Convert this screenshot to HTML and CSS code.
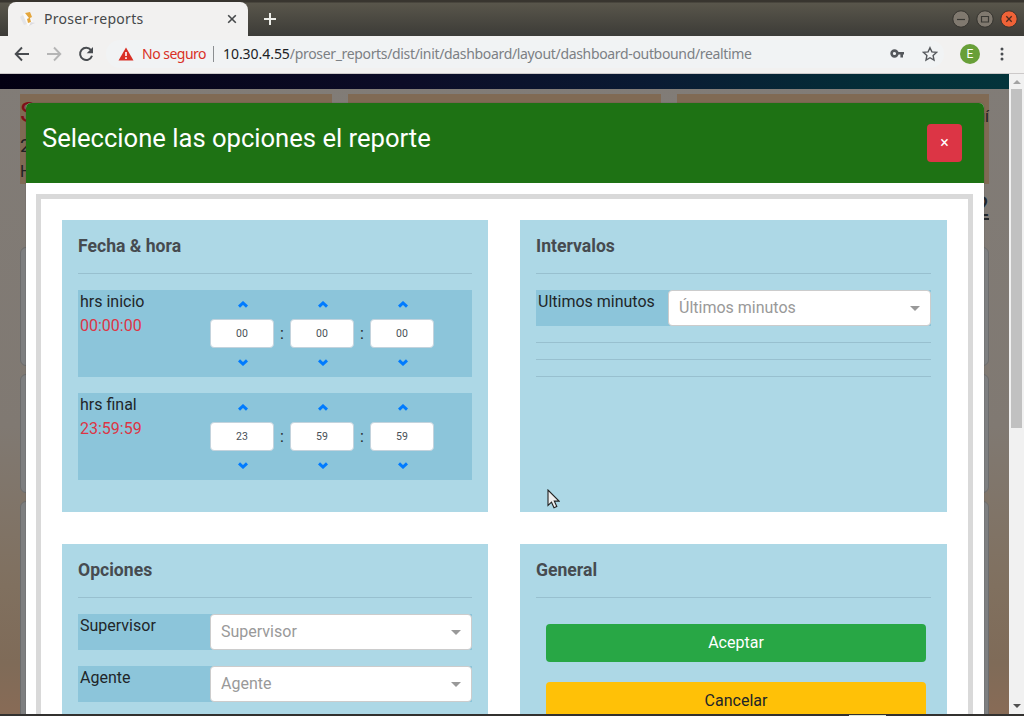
FILE: index.html
```html
<!DOCTYPE html>
<html lang="es">
<head>
<meta charset="utf-8">
<title>Proser-reports</title>
<link rel="stylesheet" href="styles.css">
</head>
<body>
<div class="window">
  <header class="titlebar">
    <div class="tab">
      <svg class="favicon" width="18" height="18" viewBox="0 0 18 18"><path d="M1 7l3-2 4 9-3 1z" fill="#e3e4e8"/><path d="M4 4l5-2 6 12-6 2z" fill="#fafafa"/><path d="M6 3l5-1 2 5-2 1 1 4-3 1-1-4 2-1z" fill="#e4a63c"/><path d="M12 12l4 1-6 3z" fill="#dddce0"/></svg>
      <span class="tab-title">Proser-reports</span>
      <svg width="10" height="10" viewBox="0 0 10 10"><path d="M1.2 1.2l7.6 7.6M8.800 1.200L1.200 8.800" stroke="#45484a" stroke-width="1.600"/></svg>
    </div>
    <svg class="new-tab" width="14" height="14" viewBox="0 0 14 14"><path d="M7 1v12M1 7h12" stroke="#eeeeea" stroke-width="2"/></svg>
    <div class="controls">
      <svg width="18" height="18" viewBox="0 0 18 18"><circle cx="9" cy="9" r="8.2" fill="#80796f" stroke="#34332e"/><path d="M5 9.5h8" stroke="#393833" stroke-width="1.2"/></svg>
      <svg width="18" height="18" viewBox="0 0 18 18"><circle cx="9" cy="9" r="8.2" fill="#80796f" stroke="#34332e"/><path d="M5.5 6.5h7v5.500h-7z" fill="none" stroke="#393833" stroke-width="1.2"/></svg>
      <svg width="18" height="18" viewBox="0 0 18 18"><circle cx="9" cy="9" r="8.2" fill="#ef6237" stroke="#38332e"/><path d="M6.300 6.300l5.400 5.400M11.700 6.300l-5.400 5.400" stroke="#4b2b20" stroke-width="1.300"/></svg>
    </div>
  </header>
  <div class="toolbar">
    <svg class="nav-icon" width="16" height="16" viewBox="0 0 16 16"><path d="M15 8H2M8 1.500L1.700 8 8 14.500" fill="none" stroke="#494c50" stroke-width="1.900"/></svg>
    <svg class="nav-icon" width="16" height="16" viewBox="0 0 16 16"><path d="M1 8h13M8 1.500L14.300 8 8 14.500" fill="none" stroke="#b5b5b5" stroke-width="1.900"/></svg>
    <svg class="nav-icon" width="16" height="16" viewBox="0 0 16 16"><path d="M13 4.100A6.100 6.100 0 1 0 14 9.800" fill="none" stroke="#494c50" stroke-width="2"/><path d="M15 1v6.300H8.700z" fill="#494c50"/></svg>
    <div class="omnibox">
      <svg width="16" height="14" viewBox="0 0 16 14"><path d="M8 0.500l7.500 13H0.500z" fill="#d93025"/><path d="M8 5v4M8 10.300v1.700" stroke="#fff" stroke-width="1.600"/></svg>
      <span class="insecure">No seguro</span>
      <span class="divider"></span>
      <span class="url"><span class="host">10.30.4.55</span><span class="path">/proser_reports/dist/init/dashboard/layout/dashboard-outbound/realtime</span></span>
      <svg class="key" width="15" height="10" viewBox="0 0 15 10"><circle cx="4.500" cy="4.500" r="2.900" fill="none" stroke="#55585c" stroke-width="2.600"/><path d="M7.500 4.300h6.500M11.700 4v4.500" stroke="#55585c" stroke-width="2.600"/></svg>
      <svg class="star" width="16" height="16" viewBox="0 0 16 16"><path d="M8 1.700l1.900 4.200 4.600.5-3.400 3.100.9 4.500-4-2.300-4 2.300.9-4.500-3.400-3.100 4.600-.5z" fill="none" stroke="#55585c" stroke-width="1.400"/></svg>
    </div>
    <span class="avatar">E</span>
    <svg width="4" height="14" viewBox="0 0 4 14"><circle cx="2" cy="2" r="1.500" fill="#494c50"/><circle cx="2" cy="7" r="1.500" fill="#494c50"/><circle cx="2" cy="12" r="1.500" fill="#494c50"/></svg>
  </div>
  <div class="viewport">
    <div class="page">
      <div class="navbar"></div>
      <div class="backdrop">
        <div class="cards">
          <div class="card"><span class="card-title">S</span><span class="card-count">2</span><span>H</span></div>
          <div class="card"></div>
          <div class="card card-end"><span>aquí</span></div>
        </div>
        <div class="total">2</div>
        <div class="boxes"><div class="box"></div><div class="box"></div><div class="box box-tall"></div></div>
      </div>
      <div class="modal">
        <div class="modal-header"><h1>Seleccione las opciones el reporte</h1><button class="close">×</button></div>
        <div class="modal-body">
          <div class="frame">
            <section class="panel">
              <h2>Fecha &amp; hora</h2><hr>
              <div class="time-row">
                <div class="label">hrs inicio<span class="value">00:00:00</span></div>
                <div class="picker">
                  <div class="spin"><svg class="chev" viewBox="0 0 10 7"><path d="M1 5.700L5 2l4 3.700"/></svg><span class="num">00</span><svg class="chev" viewBox="0 0 10 7"><path d="M1 1.300L5 5l4-3.700"/></svg></div><span class="colon">:</span>
                  <div class="spin"><svg class="chev" viewBox="0 0 10 7"><path d="M1 5.700L5 2l4 3.700"/></svg><span class="num">00</span><svg class="chev" viewBox="0 0 10 7"><path d="M1 1.300L5 5l4-3.700"/></svg></div><span class="colon">:</span>
                  <div class="spin"><svg class="chev" viewBox="0 0 10 7"><path d="M1 5.700L5 2l4 3.700"/></svg><span class="num">00</span><svg class="chev" viewBox="0 0 10 7"><path d="M1 1.300L5 5l4-3.700"/></svg></div>
                </div>
              </div>
              <div class="time-row">
                <div class="label">hrs final<span class="value">23:59:59</span></div>
                <div class="picker">
                  <div class="spin"><svg class="chev" viewBox="0 0 10 7"><path d="M1 5.700L5 2l4 3.700"/></svg><span class="num">23</span><svg class="chev" viewBox="0 0 10 7"><path d="M1 1.300L5 5l4-3.700"/></svg></div><span class="colon">:</span>
                  <div class="spin"><svg class="chev" viewBox="0 0 10 7"><path d="M1 5.700L5 2l4 3.700"/></svg><span class="num">59</span><svg class="chev" viewBox="0 0 10 7"><path d="M1 1.300L5 5l4-3.700"/></svg></div><span class="colon">:</span>
                  <div class="spin"><svg class="chev" viewBox="0 0 10 7"><path d="M1 5.700L5 2l4 3.700"/></svg><span class="num">59</span><svg class="chev" viewBox="0 0 10 7"><path d="M1 1.300L5 5l4-3.700"/></svg></div>
                </div>
              </div>
            </section>
            <section class="panel">
              <h2>Intervalos</h2><hr>
              <div class="select-row"><div class="label">Ultimos minutos</div><div class="select"><span>Últimos minutos</span><i class="caret"></i></div></div>
              <hr><hr><hr>
            </section>
            <section class="panel">
              <h2>Opciones</h2><hr>
              <div class="select-row"><div class="label">Supervisor</div><div class="select"><span>Supervisor</span><i class="caret"></i></div></div>
              <div class="select-row"><div class="label">Agente</div><div class="select"><span>Agente</span><i class="caret"></i></div></div>
            </section>
            <section class="panel">
              <h2>General</h2><hr>
              <div class="actions"><button class="btn accept">Aceptar</button><button class="btn cancel">Cancelar</button></div>
            </section>
          </div>
        </div>
      </div>
    </div>
    <div class="scrollbar"><i class="arrow arrow-up"></i><div class="thumb"></div><i class="arrow arrow-down"></i></div>
  </div>
  <footer class="desktop-edge"><span class="edge-light"></span></footer>
  <svg class="cursor" width="13" height="20" viewBox="0 0 13 20"><path d="M1 1v15.500l3.500-3.300 2.500 5.500 2.800-1.200-2.500-5.400H12z" fill="#eee" stroke="#222" stroke-width="1.100"/></svg>
</div>
</body>
</html>
```

FILE: styles.css
```css
* { box-sizing: border-box; }
body { margin: 0; overflow: hidden; font: 16px/24px Roboto, sans-serif; color: #212529; }
svg { flex: none; display: block; }
.window { position: relative; width: 1024px; height: 716px; display: flex; flex-direction: column; overflow: hidden; }
.titlebar { height: 36px; flex: none; display: flex; align-items: center; padding-left: 8px; background: linear-gradient(#38352f 0 2px, #59564b 3px, #3c3b37 100%); }
.tab { width: 240px; height: 34px; align-self: flex-end; display: flex; align-items: center; padding: 0 11px 0 11px; background: #f2f1f0; border-radius: 8px 8px 0 0; }
.tab-title { flex: 1; margin-left: 7px; font: 14px/20px "Noto Sans", sans-serif; letter-spacing: .3px; color: #45484a; }
.new-tab { margin: 2px 0 0 15px; }
.controls { margin: 2px 6px 0 auto; display: flex; gap: 6px; }
.toolbar { height: 38px; flex: none; display: flex; align-items: center; padding: 0 20px 2px 14px; background: #f2f1f0; border-bottom: 1px solid #ccc9c9; font-family: "Noto Sans", sans-serif; font-size: 14px; }
.nav-icon { margin-right: 16px; }
.omnibox { width: 838px; height: 28px; margin-left: -4px; display: flex; align-items: center; padding: 0 6px 0 12px; border-radius: 14px; background: #f1f3f4; }
.insecure { width: 65px; margin-left: 8px; color: #d93025; white-space: nowrap; letter-spacing: -.5px; }
.divider { width: 1px; height: 16px; margin: 0 9px 0 6px; background: #8b8e91; }
.url { white-space: nowrap; color: #7c8084; }
.host { color: #202124; letter-spacing: -.05px; }
.path { letter-spacing: -.335px; }
.key { margin-left: auto; }
.star { margin-left: 17px; }
.avatar { width: 20px; height: 20px; margin: 0 auto 0 16px; border-radius: 50%; background: #689f38; color: #fff; font: 12px/20px Roboto, sans-serif; text-align: center; }
.viewport { height: 640px; display: flex; }
.page { position: relative; width: 1009px; overflow: hidden; background: linear-gradient(#817c77 0, #807972 55%, #80705f 80%, #7f6b58 92%, #886b56 100%); }
.navbar { height: 15px; background: linear-gradient(90deg, #030012, #0c0c27 40%, #0a1b33 65%, #032f38 88%, #04343b); }
.backdrop { padding: 5px 20px 0; }
.cards { display: grid; grid-template-columns: repeat(3, 1fr); gap: 16px; }
.card { height: 90px; display: flex; flex-direction: column; background: #806a54; color: #202022; }
.card-title { font-size: 28px; line-height: 38px; color: #800f18; }
.card-count { font-size: 19px; line-height: 28px; }
.card-end { align-items: flex-end; padding-top: 11px; }
.total { height: 63px; padding-top: 11px; text-align: right; text-decoration: underline; font-size: 28px; }
.boxes { display: flex; flex-direction: column; gap: 8px; }
.box { height: 119px; border: 1px solid #6c6c6c; border-radius: 6px; background: #7e7f80; }
.box-tall { height: 250px; }
.modal { position: absolute; left: 26px; top: 29px; width: 957.500px; height: 640px; background: #fff; border-radius: 5px 5px 0 0; box-shadow: 0 0 1px #333; }
.modal-header { height: 80px; display: flex; justify-content: space-between; align-items: flex-start; padding: 16px 21.500px 0 16px; background: #1e7214; border-radius: 5px 5px 0 0; }
h1 { margin: 0; font-weight: 400; font-size: 25.600px; line-height: 38px; color: #fff; }
button { border: 0; font: 16px/24px Roboto, sans-serif; }
.close { width: 35px; height: 38px; margin-top: 5px; padding: 0; border-radius: 4px; background: #dc3545; color: #fff; }
.modal-body { padding: 11px 10.500px 0 10px; }
.frame { height: 700px; display: grid; grid-template: 292px 292px / 426px 427px; gap: 32px; padding: 21px 21px 0; border: 5px solid #d9d9d9; }
.panel { padding: 16px; background: #add8e6; }
h2 { margin: 0; font-size: 17.600px; line-height: 20px; font-weight: 700; color: #464b50; }
hr { height: 1px; margin: 16px 0; border: 0; background: #98c0cf; }
h2 + hr { margin-top: 17px; }
.time-row { height: 87px; display: flex; margin-bottom: 16px; background: #8cc5da; }
.label { width: 132px; flex: none; padding-left: 2px; white-space: nowrap; }
.value { display: block; color: #dc3545; }
.picker { display: flex; align-items: center; }
.spin { width: 64px; height: 87px; display: flex; flex-direction: column; align-items: center; padding: 11px 0 0 1px; }
.chev { width: 10px; height: 7px; fill: none; stroke: #007bff; stroke-width: 3; }
.num { width: 64px; height: 29px; margin: 11px 0 11px -1px; border: 1px solid #c3d3dd; border-radius: 4px; background: #fff; color: #495057; font-size: 10.500px; line-height: 27px; text-align: center; }
.colon { width: 16px; text-align: center; }
.select-row { height: 36px; display: flex; margin-bottom: 16px; background: #8cc5da; }
.select { flex: 1; display: flex; justify-content: space-between; align-items: center; padding: 0 10px; border: 1px solid #ccc; border-radius: 4px; background: #fff; color: #999; }
.caret { border: 5px solid transparent; border-top-color: #999; border-bottom: 0; }
.actions { display: flex; flex-direction: column; gap: 20px; padding: 10px 5px 0 10px; }
.btn { height: 38px; border-radius: 4px; }
.accept { background: #28a745; color: #fff; }
.cancel { background: #ffc107; color: #212529; }
.scrollbar { width: 15px; display: flex; flex-direction: column; align-items: center; background: #f1f1f1; }
.thumb { width: 11px; height: 339px; background: #c1c1c1; }
.arrow { border: 4px solid transparent; }
.arrow-up { margin: 6px 0 5px; border-bottom-color: #a3a3a3; border-top: 0; }
.arrow-down { margin: auto 0 6px; border-top-color: #505050; border-bottom: 0; }
.desktop-edge { height: 2px; background: #32312f; padding-left: 849px; }
.edge-light { display: block; width: 37px; height: 2px; padding-top: 1px; background: #dde6d4; background-clip: content-box; }
.edge-light::after { content: ""; display: block; height: 1px; background: #dde6d4; }
.cursor { position: absolute; left: 547px; top: 489px; }
```
